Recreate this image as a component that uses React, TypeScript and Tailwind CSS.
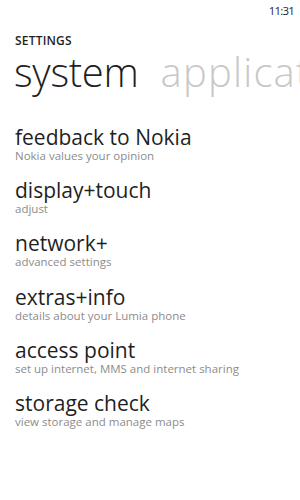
import React from "react";

const items = [
  { t: "feedback to Nokia", s: "Nokia values your opinion" },
  { t: "display+touch", s: "adjust" },
  { t: "network+", s: "advanced settings" },
  { t: "extras+info", s: "details about your Lumia phone" },
  { t: "access point", s: "set up internet, MMS and internet sharing" },
  { t: "storage check", s: "view storage and manage maps" },
];

export default function App() {
  return (
    <div
      className="w-[300px] h-[500px] bg-white overflow-hidden text-[#1f1f1f]"
      style={{ fontFamily: '"Open Sans", "Noto Sans", sans-serif' }}
    >
      <div className="h-[20px] flex justify-end items-center pt-[2px] pr-[6px] text-[11.5px] leading-none tracking-[-0.8px]">
        11:31
      </div>
      <div className="pl-[15px] pt-[13.5px] text-[12px] font-semibold leading-[14px] tracking-[0.2px]">
        SETTINGS
      </div>
      <div className="pl-[14px] whitespace-nowrap text-[40px] font-light leading-[48px] tracking-[-0.3px]">
        system<span className="ml-[22px] tracking-[1.2px] text-[#c8c8c8]">applications</span>
      </div>
      <div className="pl-[15px] pt-[30px] flex flex-col">
        {items.map((it) => (
          <div key={it.t} className="h-[53.4px] flex flex-col">
            <div className="text-[21px] leading-[23px] whitespace-nowrap">{it.t}</div>
            <div className="text-[11.5px] leading-[13px] text-[#8c8c8c] whitespace-nowrap">{it.s}</div>
          </div>
        ))}
      </div>
    </div>
  );
}
